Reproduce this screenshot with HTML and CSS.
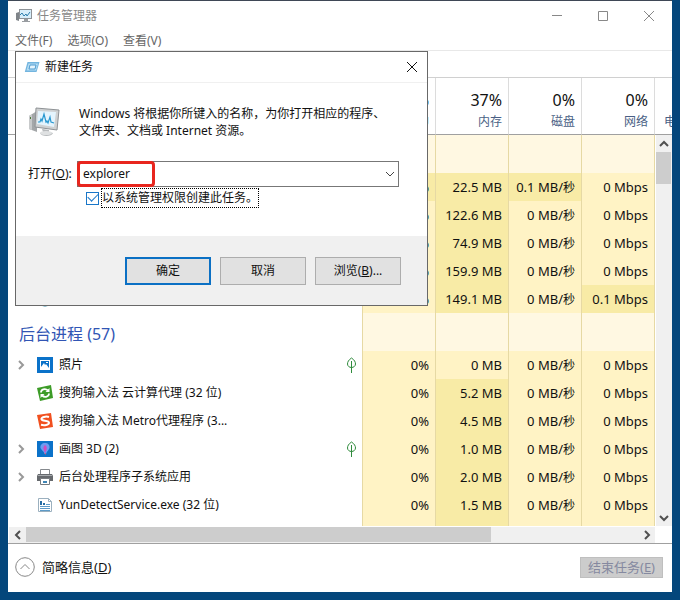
FILE: index.html
```html
<!DOCTYPE html>
<html lang="zh-CN">
<head>
<meta charset="utf-8">
<title>任务管理器</title>
<link rel="stylesheet" href="styles.css">
</head>
<body>
<main class="window">
  <header class="titlebar">
    <svg class="app-icon" viewBox="0 0 17 16" width="17" height="16" aria-hidden="true">
      <path d="M0 5l3-1v9l-3-1z" fill="#7f8489"/>
      <rect x="3.500" y="1.500" width="12" height="9" fill="#d8eefa" stroke="#8d9297"/>
      <path d="M4 7l2-2 2 3 2-2 1 2 3-4" fill="none" stroke="#2e7fae"/>
      <path d="M8 11h4v2h2v1H6v-1h2z" fill="#999da1"/>
    </svg>
    <h1>任务管理器</h1>
    <div class="caption-buttons">
      <button type="button" aria-label="最小化"><svg viewBox="0 0 12 12" width="12" height="12"><path d="M1 5.500h10"/></svg></button>
      <button type="button" aria-label="最大化"><svg viewBox="0 0 12 12" width="12" height="12"><path d="M1.500 1.500h9v9h-9z"/></svg></button>
      <button type="button" aria-label="关闭"><svg viewBox="0 0 12 12" width="12" height="12"><path d="M1 1l10 10M11 1L1 11"/></svg></button>
    </div>
  </header>
  <nav class="menu">
    <button type="button">文件(F)</button>
    <button type="button">选项(O)</button>
    <button type="button">查看(V)</button>
  </nav>
  <div class="tabs"></div>

  <section class="viewport">
    <table>
      <colgroup><col><col class="metric"><col class="metric"><col class="metric"><col class="metric"><col class="last"></colgroup>
      <thead>
        <tr>
          <th></th>
          <th><b>6%</b>CPU</th>
          <th><b>37%</b>内存</th>
          <th><b>0%</b>磁盘</th>
          <th><b>0%</b>网络</th>
          <th class="cut">电</th>
        </tr>
      </thead>
      <tbody>
        <tr class="group"><td></td><td></td><td></td><td></td><td></td><td></td></tr>
        <tr><td></td><td class="hot">0%</td><td class="hot">22.5 MB</td><td class="hot">0.1 MB/<small>秒</small></td><td>0 Mbps</td><td></td></tr>
        <tr><td></td><td>0%</td><td class="hot">122.6 MB</td><td>0 MB/<small>秒</small></td><td>0 Mbps</td><td></td></tr>
        <tr><td></td><td>0%</td><td class="hot">74.9 MB</td><td>0 MB/<small>秒</small></td><td>0 Mbps</td><td></td></tr>
        <tr><td></td><td>0%</td><td class="hot">159.9 MB</td><td>0 MB/<small>秒</small></td><td>0 Mbps</td><td></td></tr>
        <tr>
          <td><div class="name"><i></i><svg viewBox="0 0 16 16" width="16" height="16" aria-hidden="true"><circle cx="8" cy="8" r="7.500" fill="#147c9d"/></svg></div></td>
          <td>0%</td><td class="hot">149.1 MB</td><td>0 MB/<small>秒</small></td><td class="hot">0.1 Mbps</td><td></td>
        </tr>
        <tr class="group"><td><h2>后台进程 (57)</h2></td><td></td><td></td><td></td><td></td><td></td></tr>
        <tr>
          <td><div class="name">
            <svg class="expand" viewBox="0 0 8 10" width="8" height="10"><path d="M2 1l4 4-4 4"/></svg>
            <svg viewBox="0 0 16 16" width="16" height="16"><path d="M0 0h16v16H0z" fill="#0b72c9"/><path d="M3 3h10v10H3z" fill="#fff"/><path d="M4 4h8v7l-3-4-1 1-1-2-3 4z" fill="#0b72c9"/><path d="M9 5h2v1H9z" fill="#fff"/></svg>
            <span>照片</span>
            <svg class="leaf" viewBox="0 0 11 16" width="11" height="16"><path d="M5.500 1C2.500 3 1.500 5 1.500 7c0 2 1.800 3.500 4 3.500S9.500 9 9.500 7c0-2-1-4-4-6zM5.500 4v12"/></svg>
          </div></td>
          <td>0%</td><td>0 MB</td><td>0 MB/<small>秒</small></td><td>0 Mbps</td><td></td>
        </tr>
        <tr>
          <td><div class="name"><i></i>
            <svg viewBox="0 0 16 16" width="16" height="16"><path d="M0 3L14 0l2 13-13 3z" fill="#3d9c28"/><path d="M4 7.500C4 4.500 8 3 11 5.500M12 8.500c0 3-4 4.500-7 2" fill="none" stroke="#fff" stroke-width="1.800"/><path d="M12.500 3v4H8.500zM3.500 13V9h4z" fill="#fff"/></svg>
            <span>搜狗输入法 云计算代理 (32 位)</span></div></td>
          <td>0%</td><td class="hot">5.2 MB</td><td>0 MB/<small>秒</small></td><td>0 Mbps</td><td></td>
        </tr>
        <tr>
          <td><div class="name"><i></i>
            <svg viewBox="0 0 16 16" width="16" height="16"><path d="M0 2L14 0l2 14-13 2z" fill="#f1501f"/><path d="M12 4C9 3 4 4 4.500 6.300 5 8.500 12 7 12 9.800c0 2.400-5 2.700-8 2" fill="none" stroke="#fff" stroke-width="2"/></svg>
            <span>搜狗输入法 Metro代理程序 (3...</span></div></td>
          <td>0%</td><td class="hot">4.5 MB</td><td>0 MB/<small>秒</small></td><td>0 Mbps</td><td></td>
        </tr>
        <tr>
          <td><div class="name">
            <svg class="expand" viewBox="0 0 8 10" width="8" height="10"><path d="M2 1l4 4-4 4"/></svg>
            <svg viewBox="0 0 16 16" width="16" height="16"><path d="M0 0h16v16H0z" fill="#0b72c9"/><path d="M8 2c3 0 5 2 4.500 5C12 9 10 10 9 13H7.500C7 10 4 9 3.500 7 3 4 5 2 8 2z" fill="#6d9bf0"/><path d="M8 4c2 1 2 3 1.500 5L8 12 6.500 8C6 6 7 5 8 4z" fill="#d04fc0"/><path d="M7.500 12h1.500l-.7 2z" fill="#e34b6a"/></svg>
            <span>画图 3D (2)</span>
            <svg class="leaf" viewBox="0 0 11 16" width="11" height="16"><path d="M5.500 1C2.500 3 1.500 5 1.500 7c0 2 1.800 3.500 4 3.500S9.500 9 9.500 7c0-2-1-4-4-6zM5.500 4v12"/></svg>
          </div></td>
          <td>0%</td><td class="hot">1.0 MB</td><td>0 MB/<small>秒</small></td><td>0 Mbps</td><td></td>
        </tr>
        <tr>
          <td><div class="name">
            <svg class="expand" viewBox="0 0 8 10" width="8" height="10"><path d="M2 1l4 4-4 4"/></svg>
            <svg viewBox="0 0 16 16" width="16" height="16"><path d="M3.500 5V.500h9V5" fill="#fff" stroke="#85898d"/><path d="M1 5h14l1 2v5H0V7z" fill="#66696d"/><path d="M1 6.500h14" stroke="#a6aaad"/><path d="M3.500 9.500h9v6h-9z" fill="#fff" stroke="#777b7f"/><path d="M6 12h4v2H6z" fill="#3f85b5"/></svg>
            <span>后台处理程序子系统应用</span></div></td>
          <td>0%</td><td class="hot">2.0 MB</td><td>0 MB/<small>秒</small></td><td>0 Mbps</td><td></td>
        </tr>
        <tr>
          <td><div class="name"><i></i>
            <svg viewBox="0 0 16 16" width="16" height="16"><path d="M1.500 1.500h10l3 3v10h-13z" fill="#fff" stroke="#9bb0bf"/><path d="M11.500 1.500v3h3" fill="none" stroke="#9bb0bf"/><path d="M3 4h2v4H3zM6 6h2v2H6z" fill="#246ca5"/><path d="M3 9.500h10M3 11.500h10M3 13.500h10M9 7.500h4" stroke="#5d9bc8"/></svg>
            <span>YunDetectService.exe (32 位)</span></div></td>
          <td>0%</td><td class="hot">1.5 MB</td><td>0 MB/<small>秒</small></td><td>0 Mbps</td><td></td>
        </tr>
        <tr><td></td><td></td><td class="hot"></td><td></td><td></td><td></td></tr>
      </tbody>
    </table>
    <div class="vscroll">
      <button type="button" aria-label="向上滚动"><svg viewBox="0 0 10 8" width="10" height="8"><path d="M1 6l4-4 4 4"/></svg></button>
      <div class="track"><div class="thumb"></div></div>
      <button type="button" aria-label="向下滚动"><svg viewBox="0 0 10 8" width="10" height="8"><path d="M1 2l4 4 4-4"/></svg></button>
    </div>
  </section>

  <div class="hscroll">
    <button type="button" aria-label="向左滚动"><svg viewBox="0 0 8 10" width="8" height="10"><path d="M6 1L2 5l4 4"/></svg></button>
    <div class="track"><div class="thumb"></div></div>
    <button type="button" aria-label="向右滚动"><svg viewBox="0 0 8 10" width="8" height="10"><path d="M2 1l4 4-4 4"/></svg></button>
  </div>

  <footer class="bottom">
    <button type="button" class="fewer">
      <svg viewBox="0 0 20 20" width="20" height="20"><circle cx="10" cy="10" r="9.300"/><path d="M5.500 12L10 7.500l4.500 4.500"/></svg>
      <span>简略信息(<u>D</u>)</span>
    </button>
    <button type="button" class="end-task" disabled>结束任务(<u>E</u>)</button>
  </footer>

  <form class="dialog" role="dialog" aria-labelledby="dialog-title">
    <div class="dialog-title">
      <svg viewBox="0 0 16 12" width="16" height="12" aria-hidden="true"><path d="M3.500 1h12l-3 10H.800z" fill="#73b5df"/><path d="M4.500 2.500h9.500l-2 7H2.500z" fill="#b4dcf3"/><path d="M6 4h6l-1 4H5z" fill="#e6f5fd" stroke="#4f9bd0"/></svg>
      <h2 id="dialog-title">新建任务</h2>
      <button type="button" aria-label="关闭"><svg viewBox="0 0 12 12" width="12" height="12"><path d="M1 1l10 10M11 1L1 11"/></svg></button>
    </div>
    <div class="dialog-body">
      <div class="intro">
        <svg viewBox="0 0 32 30" width="32" height="30" aria-hidden="true">
          <path d="M1 9l8-5v21l-8-3z" fill="#a4a7a9"/><path d="M1 9l3-2v16l-3-1z" fill="#c8cacb"/><path d="M2 10h1v2H2z" fill="#487b35"/>
          <path d="M8 1l23 2-2 20-22-3z" fill="#cfd1d2" stroke="#8e9295"/>
          <path d="M10 4l18 1-2 15-17-3z" fill="#e4f4fd"/>
          <path d="M10 15l2 0 1-3 1 2 2-7 2 8 1-1 1 2 2-6 1 5 3 1" fill="none" stroke="#2998d0" stroke-width="1.200"/>
          <path d="M14 22l7 1v2l4 1c-1 4-12 4-13 0l3-1z" fill="#b7babc"/><ellipse cx="18" cy="26" rx="6" ry="2" fill="#dfe1e2"/>
        </svg>
        <p>Windows 将根据你所键入的名称，为你打开相应的程序、文件夹、文档或 Internet 资源。</p>
      </div>
      <div class="field">
        <label for="command">打开(<u>O</u>):</label>
        <div class="combo">
          <input id="command" type="text" value="explorer">
          <button type="button" aria-label="展开列表"><svg viewBox="0 0 10 8" width="10" height="8"><path d="M1 2l4 4 4-4"/></svg></button>
          <span class="highlight"></span>
        </div>
      </div>
      <div class="admin">
        <input id="admin" type="checkbox" checked>
        <label for="admin">以系统管理权限创建此任务。</label>
      </div>
    </div>
    <div class="dialog-actions">
      <button type="submit" class="primary">确定</button>
      <button type="button">取消</button>
      <button type="button">浏览(<u>B</u>)...</button>
    </div>
  </form>
</main>
</body>
</html>
```

FILE: styles.css
```css
* {
  box-sizing: border-box;
}

body {
  display: flex;
  height: 100vh;
  margin: 0;
  padding: 0 8px 8px;
  overflow: hidden;
  background: #04467b;
  font: 12px/18px "Noto Sans", "Noto Sans CJK SC", sans-serif;
  color: #111;
}

h1,
h2,
p {
  margin: 0;
  font-size: inherit;
  font-weight: normal;
}

button,
input {
  font: inherit;
  color: inherit;
}

button {
  display: flex;
  align-items: center;
  justify-content: center;
  padding: 0;
  border: 0;
  background: none;
}

button svg,
.expand,
.leaf {
  fill: none;
  stroke: currentColor;
}

svg {
  flex: none;
}

.window {
  position: relative;
  display: flex;
  flex: 1;
  flex-direction: column;
  min-width: 0;
  border-top: 1px solid #3f4856;
  background: #fff;
}

.titlebar {
  display: flex;
  align-items: center;
  gap: 4px;
  height: 29px;
  padding-left: 8px;
  color: #888;
}

.caption-buttons {
  display: flex;
  margin-left: auto;
}

.caption-buttons button {
  width: 46px;
  height: 29px;
}

.menu {
  display: flex;
  gap: 15px;
  height: 20px;
  padding: 1px 0 0 7px;
  color: #666;
}

.tabs {
  height: 28px;
  border-top: 1px solid #e8e8e8;
  border-bottom: 1px solid #d0d0d0;
}

.viewport {
  position: relative;
  flex: 1;
  min-height: 0;
  overflow: hidden;
}

table {
  width: 100%;
  table-layout: fixed;
  border-collapse: separate;
  border-spacing: 0;
}

.metric {
  width: 73px;
}

.last {
  width: 17px;
}

th {
  height: 57px;
  padding: 11px 6px 0 0;
  border-right: 1px solid #dcdcdc;
  border-bottom: 1px solid #a0a0a0;
  font-weight: normal;
  text-align: right;
  vertical-align: top;
  line-height: 22px;
  color: #4a5f85;
}

th b {
  display: block;
  font-size: 16px;
  font-weight: normal;
  color: #111;
}

.cut {
  padding: 33px 0 0 9px;
  overflow: hidden;
  border-right: 0;
  text-align: left;
  white-space: nowrap;
}

td {
  height: 28px;
  padding: 0 6px 0 0;
  border-right: 1px solid #e6d9a4;
  background: #fff3c5;
  font-size: 13px;
  text-align: right;
  white-space: nowrap;
}

td small {
  font-size: 12px;
}

td.hot {
  background: #f8eba6;
}

.group td {
  height: 38px;
  background: #fff8e2;
}

tr td:first-child,
tr td:last-child {
  background: #fff;
  font-size: 12px;
  text-align: left;
}

tr td:last-child {
  border-right: 0;
}

td h2 {
  padding: 4px 0 0 11px;
  font-size: 16px;
  line-height: 24px;
  color: #3155b4;
}

.name {
  display: flex;
  align-items: center;
  padding-left: 9px;
}

.name i,
.expand {
  width: 8px;
  margin-right: 12px;
}

.expand {
  stroke: #999;
  stroke-width: 2;
}

.name span {
  margin-left: 6px;
}

.leaf {
  margin-left: auto;
  margin-right: -1px;
  stroke: #2f8b3c;
}

.vscroll {
  position: absolute;
  top: 57px;
  right: 0;
  bottom: 0;
  display: flex;
  flex-direction: column;
  width: 16px;
  padding-right: 1px;
  background: #f0f0f0;
}

.vscroll button {
  height: 17px;
}

.vscroll svg,
.hscroll svg {
  stroke: #505050;
  stroke-width: 2;
}

.track {
  flex: 1;
}

.thumb {
  background: #cdcdcd;
}

.vscroll .thumb {
  height: 9%;
}

.hscroll {
  display: flex;
  height: 16px;
  margin: 1px 17px 0 1px;
  background: #f0f0f0;
}

.hscroll button {
  width: 17px;
}

.hscroll .thumb {
  width: 76%;
  height: 15px;
}

.bottom {
  display: flex;
  align-items: center;
  justify-content: space-between;
  height: 49px;
  padding: 0 9px 2px 7px;
  border-top: 1px solid #a0a0a0;
  font-size: 13px;
}

.fewer {
  gap: 7px;
}

.fewer svg {
  stroke: #888;
}

.end-task {
  width: 83px;
  height: 21px;
  border: 1px solid #bfbfbf;
  background: #ccc;
  color: #8589a0;
}

.dialog {
  position: absolute;
  top: 50px;
  left: 7px;
  width: 413px;
  border: 1px solid #686868;
  background: #fff;
}

.dialog-title {
  display: flex;
  align-items: center;
  gap: 5px;
  height: 31px;
  padding-left: 8px;
  border-bottom: 1px solid #f0f0f0;
}

.dialog-title button {
  width: 30px;
  height: 28px;
  margin-left: auto;
}

.dialog-body {
  height: 153px;
  padding: 22px 28px 0 12px;
}

.intro {
  display: flex;
  gap: 19px;
  align-items: center;
}

.intro p {
  flex: 1;
  padding-right: 12px;
  line-height: 17px;
}

.field {
  display: flex;
  align-items: center;
  margin-top: 22px;
}

.field label {
  width: 49px;
  white-space: nowrap;
}

.combo {
  position: relative;
  display: flex;
  flex: 1;
  height: 26px;
  border: 1px solid #777;
}

.combo input {
  flex: 1;
  min-width: 0;
  padding: 0 5px;
  border: 0;
  outline: 0;
  background: none;
}

.combo button {
  width: 17px;
  color: #444;
}

.highlight {
  position: absolute;
  top: -1px;
  left: -1px;
  width: 78px;
  height: 26px;
  border: 3px solid #e8261e;
  border-radius: 4px;
  pointer-events: none;
}

.admin {
  display: flex;
  align-items: center;
  gap: 2px;
  margin: 1px 0 0 58px;
}

.admin input {
  display: grid;
  place-items: center;
  width: 13px;
  height: 13px;
  margin: 0;
  appearance: none;
  border: 1px solid #1976c8;
  background: #fff;
}

.admin input:checked::before {
  content: "";
  width: 9px;
  height: 5px;
  border: solid #1976c8;
  border-width: 0 0 1px 1px;
  transform: translateY(-2px) rotate(-45deg);
}

.admin label {
  border: 1px dotted #000;
}

.dialog-actions {
  display: flex;
  justify-content: flex-end;
  gap: 9px;
  height: 69px;
  padding: 21px 26px 0;
  background: #f0f0f0;
}

.dialog-actions button {
  width: 86px;
  height: 28px;
  border: 1px solid #adadad;
  background: #e1e1e1;
}

.dialog-actions .primary {
  border: 2px solid #0b70c4;
}
```
